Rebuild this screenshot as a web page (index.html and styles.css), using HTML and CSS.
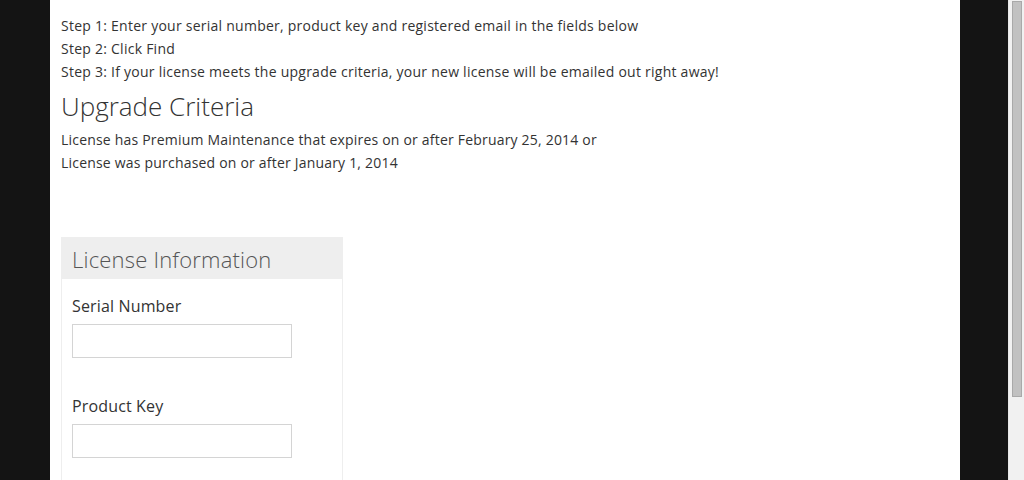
FILE: index.html
```html
<!DOCTYPE html>
<html>
<head>
<meta charset="utf-8">
<link rel="stylesheet" href="styles.css">
</head>
<body>
<div class="viewport">
  <main class="page">
    <div class="steps">
      <p>Step 1: Enter your serial number, product key and registered email in the fields below</p>
      <p>Step 2: Click Find</p>
      <p>Step 3: If your license meets the upgrade criteria, your new license will be emailed out right away!</p>
    </div>
    <h2 class="heading">Upgrade Criteria</h2>
    <div class="criteria">
      <p>License has Premium Maintenance that expires on or after February 25, 2014 or</p>
      <p>License was purchased on or after January 1, 2014</p>
    </div>
    <section class="panel">
      <div class="panel-head">License Information</div>
      <div class="panel-body">
        <div class="field">
          <label class="label">Serial Number</label>
          <input class="input" type="text">
        </div>
        <div class="field">
          <label class="label">Product Key</label>
          <input class="input" type="text">
        </div>
      </div>
    </section>
  </main>
</div>
<div class="scrollbar"><div class="thumb"></div></div>
</body>
</html>
```
FILE: styles.css
```css
html, body {
  margin: 0;
  padding: 0;
  height: 480px;
  overflow: hidden;
}
body {
  display: flex;
  background: #141414;
  font-family: "Open Sans", "Liberation Sans", sans-serif;
  color: #333;
}
.viewport {
  flex: 1;
  display: flex;
  height: 480px;
}
.page {
  width: 910px;
  margin: 0 48px 0 50px;
  background: #fff;
  padding: 14px 11px 0;
  box-sizing: border-box;
}
.steps p, .criteria p {
  margin: 0;
  font-size: 14px;
  line-height: 23px;
  letter-spacing: 0.25px;
}
.criteria p {
  letter-spacing: 0.2px;
}
.heading {
  margin: 8px 0 7px;
  font-size: 26px;
  font-weight: 300;
  line-height: 30px;
  color: #333;
}
.panel {
  margin-top: 63px;
  width: 282px;
  border: 1px solid #eee;
  box-sizing: border-box;
}
.panel-head {
  background: #eee;
  height: 41px;
  padding: 0 10px;
  font-size: 22px;
  font-weight: 300;
  line-height: 43px;
  letter-spacing: 0.2px;
  color: #555;
}
.panel-body {
  padding: 16px 10px 0;
}
.field {
  display: flex;
  flex-direction: column;
  margin-bottom: 37px;
}
.label {
  font-size: 16px;
  line-height: 22px;
  margin-bottom: 7px;
  letter-spacing: 0.15px;
  color: #333;
}
.input {
  width: 220px;
  height: 34px;
  box-sizing: border-box;
  border: 1px solid #d4d4d4;
  margin: 0;
  padding: 0 6px;
  background: #fff;
}
.scrollbar {
  width: 16px;
  height: 480px;
  background: #f1f1f1;
  border-left: 1px solid #e8e8e8;
  box-sizing: border-box;
  padding: 1px 2px 0 3px;
}
.thumb {
  height: 396px;
  background: #c1c1c1;
  border: 1px solid #a9a9a9;
  box-sizing: border-box;
}
```
